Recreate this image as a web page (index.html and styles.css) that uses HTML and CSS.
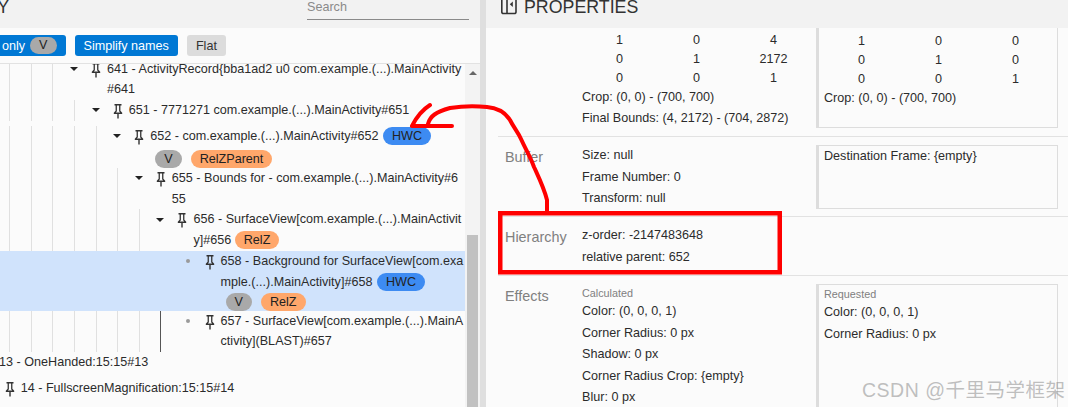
FILE: index.html
```html
<!DOCTYPE html>
<html lang="en">
<head>
<meta charset="utf-8">
<title>Winscope hierarchy and properties</title>
<link rel="stylesheet" href="styles.css">
</head>
<body>
<svg width="0" height="0" class="defs">
  <symbol id="pin" viewBox="0 0 12 16">
    <path d="M2.5 1h7v1.4H8.4v5.4l1.8 2v1.2H6.7V15.5H5.3V10.9H1.8V9.7l1.8-2V2.4H2.5z M4.9 2.4v5.9l-1 1.3h4.2l-1-1.3V2.4z" fill-rule="evenodd"/>
  </symbol>
</svg>
<main class="app">
  <section class="left">
    <header class="left-head">
      <div class="title-clip"><h2 class="title">HIERARCHY</h2></div>
      <div class="search">Search</div>
    </header>
    <div class="filters">
      <button class="btn on clip-left">only <span class="chip grey in-btn">V</span></button>
      <button class="btn on">Simplify names</button>
      <button class="btn">Flat</button>
    </div>
    <div class="tree-wrap">
      <div class="tree">
        <div class="row clip-first">
          <i class="g"></i><i class="g"></i><i class="g"></i>
          <span class="twist"><b class="caret"></b></span>
          <svg class="pin"><use href="#pin"/></svg>
          <div class="txt">641 - ActivityRecord{bba1ad2 u0 com.example.(...).MainActivity#641</div>
        </div>
        <div class="row single">
          <i class="g"></i><i class="g"></i><i class="g"></i><i class="g"></i>
          <span class="twist"><b class="caret"></b></span>
          <svg class="pin"><use href="#pin"/></svg>
          <div class="txt">651 - 7771271 com.example.(...).MainActivity#651</div>
        </div>
        <div class="row">
          <i class="g"></i><i class="g"></i><i class="g"></i><i class="g"></i><i class="g"></i>
          <span class="twist"><b class="caret"></b></span>
          <svg class="pin"><use href="#pin"/></svg>
          <div class="txt">652 - com.example.(...).MainActivity#652 <span class="chip blue">HWC</span>
            <div class="chips spaced"><span class="chip grey">V</span><span class="chip orange">RelZParent</span></div>
          </div>
        </div>
        <div class="row">
          <i class="g"></i><i class="g"></i><i class="g"></i><i class="g"></i><i class="g"></i><i class="g"></i>
          <span class="twist"><b class="caret"></b></span>
          <svg class="pin"><use href="#pin"/></svg>
          <div class="txt">655 - Bounds for - com.example.(...).MainActivity#655</div>
        </div>
        <div class="row">
          <i class="g"></i><i class="g"></i><i class="g"></i><i class="g"></i><i class="g"></i><i class="g"></i><i class="g"></i>
          <span class="twist"><b class="caret"></b></span>
          <svg class="pin"><use href="#pin"/></svg>
          <div class="txt">656 - SurfaceView[com.example.(...).MainActivity]#656 <span class="chip orange">RelZ</span></div>
        </div>
        <div class="row leaf selected">
          <i class="g"></i><i class="g"></i><i class="g"></i><i class="g"></i><i class="g"></i><i class="g"></i><i class="g"></i><i class="g"></i>
          <span class="twist"><b class="dot"></b></span>
          <svg class="pin"><use href="#pin"/></svg>
          <div class="txt">658 - Background for SurfaceView[com.example.(...).MainActivity]#658 <span class="chip blue">HWC</span>
            <div class="chips"><span class="chip grey">V</span><span class="chip orange">RelZ</span></div>
          </div>
        </div>
        <div class="row leaf">
          <i class="g"></i><i class="g"></i><i class="g"></i><i class="g"></i><i class="g"></i><i class="g"></i><i class="g"></i><i class="g dark"></i>
          <span class="twist"><b class="dot"></b></span>
          <svg class="pin"><use href="#pin"/></svg>
          <div class="txt">657 - SurfaceView[com.example.(...).MainActivity](BLAST)#657</div>
        </div>
        <div class="row single up2">
          <span class="twist"></span>
          <svg class="pin"><use href="#pin"/></svg>
          <div class="txt">13 - OneHanded:15:15#13</div>
        </div>
        <div class="row single up1">
          <span class="twist"></span>
          <svg class="pin"><use href="#pin"/></svg>
          <div class="txt">14 - FullscreenMagnification:15:15#14</div>
        </div>
      </div>
      <div class="scrollbar">
        <b class="arrow"></b>
        <div class="thumb"></div>
      </div>
    </div>
  </section>
  <div class="gutter"></div>
  <section class="right">
    <header class="right-head">
      <svg class="prop-icon" viewBox="0 0 17 17"><path d="M1.800 0V14A1.500 1.500 0 0 0 3.300 15.500H14.500A1.500 1.500 0 0 0 16 14V0M7 0V15.500" fill="none" stroke="#333" stroke-width="1.600"/><path d="M12.800 3.500V9L9.800 6.250z" fill="#333"/></svg>
      <h2 class="title">PROPERTIES</h2>
    </header>
    <div class="props">
      <div class="sec sec-transform">
        <div class="label"></div>
        <div class="col">
          <div class="matrix"><span>1</span><span>0</span><span>4</span><span>0</span><span>1</span><span>2172</span><span>0</span><span>0</span><span>1</span></div>
          <p>Crop: (0, 0) - (700, 700)</p>
          <p class="final">Final Bounds: (4, 2172) - (704, 2872)</p>
        </div>
        <div class="box box-top">
          <div class="matrix"><span>1</span><span>0</span><span>0</span><span>0</span><span>1</span><span>0</span><span>0</span><span>0</span><span>1</span></div>
          <p>Crop: (0, 0) - (700, 700)</p>
        </div>
      </div>
      <div class="sec sec-buffer">
        <div class="label">Buffer</div>
        <div class="col">
          <p>Size: null</p>
          <p>Frame Number: 0</p>
          <p>Transform: null</p>
        </div>
        <div class="box"><p>Destination Frame: {empty}</p></div>
      </div>
      <div class="sec sec-hier">
        <div class="label">Hierarchy</div>
        <div class="col">
          <p>z-order: -2147483648</p>
          <p>relative parent: 652</p>
        </div>
      </div>
      <div class="sec sec-effects">
        <div class="label">Effects</div>
        <div class="col">
          <h4>Calculated</h4>
          <p>Color: (0, 0, 0, 1)</p>
          <p>Corner Radius: 0 px</p>
          <p>Shadow: 0 px</p>
          <p>Corner Radius Crop: {empty}</p>
          <p>Blur: 0 px</p>
        </div>
        <div class="box box-bottom">
          <h4>Requested</h4>
          <p>Color: (0, 0, 0, 1)</p>
          <p>Corner Radius: 0 px</p>
        </div>
      </div>
    </div>
  </section>
</main>
<svg class="marks" viewBox="0 0 1068 407" width="1068" height="407">
  <path d="M430 105C422 110 416 118 412 126L452 126M428 124C430 116 436 112 450 108C462 106 478 106 487 107C498 108 505 112 510 120C514 128 518 132 521 139C526 150 530 156 534 167C539 178 544 188 547 200V212" fill="none" stroke="#f00" stroke-width="4" stroke-linecap="round" stroke-linejoin="round"/>
  <rect x="500.250" y="213.250" width="279.500" height="59" fill="none" stroke="#f00" stroke-width="4.500"/>
</svg>
<div class="watermark">CSDN @千里马学框架</div>
</body>
</html>
```
FILE: styles.css
```css
* { box-sizing: border-box; }
html, body { margin: 0; height: 407px; overflow: hidden; background: #fbfbfb; }
body { font: 12.6px/20.8px "Liberation Sans", Arial, sans-serif; color: #2b2b2b; position: relative; }
.defs { position: absolute; }
.app { display: flex; height: 407px; }

.left { width: 480px; flex: none; display: flex; flex-direction: column; }
.left-head { height: 28px; flex: none; background: #f2f2f2; display: flex; justify-content: space-between; padding-right: 11px; overflow: hidden; }
.title { margin: -3px 0 0; font-size: 17.8px; line-height: 20px; font-weight: 400; color: #333; white-space: nowrap; }
.title-clip { width: 9px; display: flex; justify-content: flex-end; overflow: hidden; flex: none; }
.search { width: 162px; height: 20px; border-bottom: 1px solid #8a8a8a; color: #8a8a8a; font-size: 12.6px; line-height: 15px; }
.filters { height: 36px; flex: none; display: flex; align-items: center; gap: 9px; border-bottom: 1px solid #e2e2e2; overflow: hidden; }
.btn { height: 21px; padding: 0 9px; border: 0; border-radius: 3px; background: #dcdcdc; color: #333; font: 12.6px "Liberation Sans", Arial, sans-serif; display: flex; align-items: center; }
.btn.on { background: #0078d4; color: #fff; }
.clip-left { margin-left: -7px; }

.tree-wrap { flex: 1; display: flex; min-height: 0; }
.tree { width: 465px; flex: none; overflow: hidden; padding-left: 9.3px; }
.row { display: flex; align-items: stretch; }
.clip-first { margin-top: -5.5px; }
.single { padding-bottom: 5.2px; }
.up1 { margin-left: -21.6px; }
.up2 { margin-left: -43.2px; }
.g { width: 21.6px; flex: none; border-left: 1px solid #e0e0e0; }
.g.dark { border-left-color: #555; }
.twist { width: 22px; height: 20.8px; margin-left: -11px; flex: none; display: flex; align-items: center; justify-content: center; }
.leaf .twist { margin-left: -5.500px; }
.caret { width: 0; height: 0; border: 4px solid transparent; border-top: 4px solid #222; border-bottom: 0; }
.dot { width: 4px; height: 4px; border-radius: 50%; background: #9a9a9a; }
.pin { width: 12px; height: 16px; flex: none; margin: 3px 5px 0; fill: #333; }
.txt { flex: 1; min-width: 0; word-break: break-all; }
.selected { background: #d0e3fc; margin-left: -9.3px; padding-left: 9.3px; }
.selected .g { border-left-color: transparent; }
.chip { display: inline-block; height: 18px; line-height: 18px; padding: 0 9px; border-radius: 9px; color: #222; word-break: normal; }
.blue { background: #3d8bf2; margin-left: 1px; }
.grey { background: #a9a9a9; padding: 0 9px; }
.orange { background: #ffa76b; }
.in-btn { height: 17px; line-height: 17px; margin-left: 5px; padding: 0 9px; }
.chips { display: flex; gap: 9px; height: 18px; margin-left: 5px; }
.chips.spaced { margin-top: 3px; }

.scrollbar { flex: 1; background: #f3f3f3; display: flex; flex-direction: column; align-items: center; padding: 7px 2px 0; }
.arrow { width: 0; height: 0; border: 4px solid transparent; border-bottom: 4px solid #666; border-top: 0; }
.thumb { width: 11px; flex: 1; margin-top: 160px; background: #c1c1c1; }

.gutter { width: 6px; flex: none; background: #dfdfdf; }

.right { flex: 1; min-width: 0; display: flex; flex-direction: column; }
.right-head { height: 28px; flex: none; background: #f2f2f2; display: flex; align-items: flex-start; padding-left: 14px; overflow: hidden; gap: 7px; }
.prop-icon { width: 17px; height: 17px; margin-top: -2px; flex: none; }
.props { padding-left: 12px; }
.sec { display: flex; border-bottom: 1px solid #e2e2e2; }
.label { width: 84px; flex: none; padding-left: 7px; color: #808080; font-size: 14.4px; }
.col { width: 234px; flex: none; }
.box { width: 242px; flex: none; margin-bottom: 7px; border: 1px solid #ddd; border-left: 3px solid #ddd; padding-left: 5px; }
.sec p { margin: 0; height: 21.5px; }
h4 { margin: 0; font-size: 10.8px; line-height: 16px; font-weight: 400; color: #808080; }
.matrix { display: grid; grid-template-columns: repeat(3, 77px); line-height: 19px; margin: 0 0 -1px -1px; padding-top: 1px; text-align: center; }
.sec-transform { height: 109px; padding-top: 2px; }
.sec-transform p { height: 19.5px; }
.sec-transform p.final { height: 20px; line-height: 22px; }
.box-top { height: 100px; margin-top: -2px; border-top: 0; padding-top: 3px; }
.sec-buffer { height: 80px; padding-top: 8px; }
.sec-buffer .label { padding-top: 2px; }
.sec-buffer .box { height: 64px; }
.sec-hier { height: 59px; padding-top: 8px; }
.sec-hier .label { padding-top: 2px; }
.sec-hier p { height: 22px; }
.sec-effects { padding-top: 9px; border-bottom: 0; }
.sec-effects .label { padding-top: 1px; }
.sec-effects .box { height: 130px; margin-top: -1px; }
.box-bottom h4 { margin-top: 1px; }

.marks { position: absolute; left: 0; top: 0; pointer-events: none; }
.watermark { position: absolute; left: 862px; top: 379px; font: 19.5px/22px "Liberation Sans", "Noto Sans CJK SC", sans-serif; color: rgba(130,130,130,.5); letter-spacing: .5px; white-space: nowrap; }
```
